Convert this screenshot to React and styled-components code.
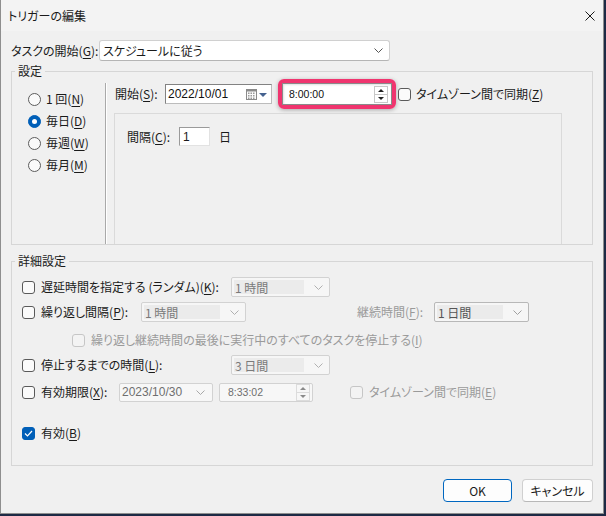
import React from 'react';
import styled, { createGlobalStyle } from 'styled-components';

const Global = createGlobalStyle`
  html, body { margin: 0; padding: 0; background: #1d2a45; }
  body {
    font-family: "Noto Sans CJK JP", "Noto Sans", sans-serif;
    font-size: 12px;
    color: #1a1a1a;
    font-feature-settings: "palt";
  }
  * { box-sizing: border-box; }
`;

const Window = styled.div`
  width: 604px;
  height: 514px;
  background: #f0f0f0;
  border: 1px solid #8e8e8e;
  border-top: none;
  display: flex;
  flex-direction: column;
`;

const TitleBar = styled.div`
  height: 31px;
  flex: none;
  background: #f3f3f3;
  display: flex;
  align-items: center;
  justify-content: space-between;
  padding-left: 7px;
`;

const Title = styled.span`
  font-size: 12px;
  line-height: 16px;
`;

const CloseBtn = styled.span`
  width: 10px;
  height: 10px;
  margin-right: 8px;
  display: flex;
`;

const Body = styled.div`
  flex: 1;
  padding: 9px 10px 0 10px;
  display: flex;
  flex-direction: column;
`;

const Row = styled.div`
  display: flex;
  align-items: center;
  height: ${p => p.$h || 20}px;
  margin-top: ${p => p.$mt || 0}px;
  margin-left: ${p => p.$ml || 0}px;
  flex: none;
`;

const Label = styled.span`
  flex: none;
  width: ${p => (p.$w ? p.$w + 'px' : 'auto')};
  margin-left: ${p => p.$ml || 0}px;
  color: ${p => (p.$gray ? '#9a9a9a' : '#1a1a1a')};
  line-height: 16px;
  white-space: nowrap;
`;

const Key = styled.span`
  text-decoration: underline;
  text-underline-offset: 2px;
`;

const Combo = styled.div`
  width: ${p => p.$w}px;
  height: 21px;
  background: #ffffff;
  border: 1px solid #d0d0d0;
  border-bottom-color: #b5b5b5;
  border-radius: 3px;
  display: flex;
  align-items: center;
  justify-content: space-between;
  padding: 0 6px 0 3px;
`;

const DisCombo = styled.div`
  width: ${p => p.$w}px;
  height: 20px;
  background: #f6f6f6;
  border: 1px solid ${p => (p.$strong ? '#b8b8b8' : '#d2d2d2')};
  border-radius: 2px;
  display: flex;
  align-items: center;
  padding: 2px 6px 2px 2px;
  margin-left: ${p => p.$ml || 0}px;
`;

const DisField = styled.span`
  flex: 1;
  height: 100%;
  background: #ebebeb;
  color: ${p => (p.$strong ? '#555' : '#7a7a7a')};
  display: flex;
  align-items: center;
  padding-left: 1px;
  margin-right: 10px;
  font-size: 12px;
`;

const Group = styled.fieldset`
  margin: ${p => p.$mt}px 0 0 0;
  padding: 0;
  border: 1px solid #d6d6d6;
  min-width: 0;
  flex: none;
`;

const Legend = styled.legend`
  margin-left: 3px;
  padding: 0 3px;
  line-height: 16px;
  font-size: 12px;
`;

const SettingsBody = styled.div`
  display: flex;
  height: 165px;
`;

const RadioCol = styled.div`
  width: 93px;
  padding: 9px 0 0 16px;
  display: flex;
  flex-direction: column;
`;

const RadioRow = styled.label`
  height: 22px;
  display: flex;
  align-items: center;
  gap: 5px;
`;

const Radio = styled.span`
  flex: none;
  width: 13px;
  height: 13px;
  border-radius: 50%;
  border: 1px solid ${p => (p.$on ? '#005fb8' : '#5c5c5c')};
  background: ${p => (p.$on ? '#005fb8' : '#fafafa')};
  display: flex;
  align-items: center;
  justify-content: center;
  &::after {
    content: '';
    width: 5px;
    height: 5px;
    border-radius: 50%;
    background: #fff;
    display: ${p => (p.$on ? 'block' : 'none')};
  }
`;

const VDivider = styled.div`
  width: 2px;
  margin-top: 4px;
  border-left: 1px solid #a9a9a9;
  border-right: 1px solid #ffffff;
`;

const RightArea = styled.div`
  flex: 1;
  display: flex;
  flex-direction: column;
`;

const StartRow = styled.div`
  height: 30px;
  display: flex;
  align-items: center;
  padding-left: 8px;
`;

const DateBox = styled.div`
  width: ${p => p.$w}px;
  height: ${p => p.$h || 20}px;
  background: ${p => (p.$dis ? '#f7f7f7' : '#ffffff')};
  border: 1px solid ${p => (p.$dis ? '#d2d2d2' : '#828282')};
  border-bottom-color: ${p => (p.$dis ? '#d2d2d2' : '#bcbcbc')};
  border-right-color: ${p => (p.$dis ? '#d2d2d2' : '#bcbcbc')};
  border-radius: ${p => (p.$dis ? 2 : 0)}px;
  display: flex;
  align-items: center;
  padding: 0 ${p => p.$pr || 4}px 0 ${p => p.$pl || 2}px;
  margin-left: ${p => p.$ml || 0}px;
  font-family: "Liberation Sans", Arial, sans-serif;
  font-size: ${p => p.$fs || 12}px;
  color: ${p => (p.$dis ? '#6f6f6f' : '#111')};
`;

const Grow = styled.span`
  flex: 1;
`;

const Ring = styled.div`
  width: 118px;
  height: 30px;
  margin-left: 6px;
  border: 4px solid #f0356f;
  border-radius: 6px;
  box-shadow: 0 1px 4px rgba(0, 0, 0, 0.3);
  display: flex;
`;

const TimeBox = styled.div`
  flex: 1;
  background: #ffffff;
  border: 1px solid #8a8a8a;
  box-shadow: inset 1px 1px 2px rgba(0, 0, 0, 0.12);
  display: flex;
  align-items: center;
  padding: 0 3px 0 6px;
  font-family: "Liberation Sans", Arial, sans-serif;
  font-size: 10.5px;
  color: #111;
`;

const CheckWrap = styled.label`
  display: flex;
  align-items: center;
  margin-left: ${p => p.$ml || 0}px;
`;

const Box = styled.span`
  flex: none;
  width: 13px;
  height: 13px;
  border-radius: 3px;
  border: 1px solid ${p => (p.$checked ? '#005fb8' : p.$disabled ? '#c6c6c6' : '#5a5a5a')};
  background: ${p => (p.$checked ? '#005fb8' : p.$disabled ? '#f3f3f3' : '#fbfbfb')};
  display: flex;
  align-items: center;
  justify-content: center;
`;

const Panel = styled.div`
  flex: 1;
  width: 448px;
  margin: 4px 0 0 7px;
  border: 1px solid #dadada;
  border-bottom: none;
  padding: 13px 0 0 12px;
`;

const Input = styled.div`
  width: 31px;
  height: 19px;
  background: #ffffff;
  border: 1px solid #e2e2e2;
  border-left-color: #9a9a9a;
  border-top-color: #9a9a9a;
  display: flex;
  align-items: center;
  padding-left: 3px;
  font-family: "Liberation Sans", Arial, sans-serif;
  font-size: 12px;
`;

const AdvBody = styled.div`
  padding: 8px 0 22px 10px;
  display: flex;
  flex-direction: column;
`;

const Footer = styled.div`
  margin-top: 13px;
  display: flex;
  justify-content: flex-end;
  gap: 10px;
`;

const Button = styled.button`
  width: ${p => p.$w}px;
  height: 23px;
  border-radius: 4px;
  border: 1px solid ${p => (p.$primary ? '#0067c0' : '#d0d0d0')};
  border-bottom-color: ${p => (p.$primary ? '#0067c0' : '#b8b8b8')};
  background: #fdfdfd;
  font-family: "Noto Sans CJK JP", sans-serif;
  font-size: 12px;
  color: #1a1a1a;
  padding: 0;
  font-feature-settings: "palt";
`;

const Chevron = ({ color = '#6e6e6e' }) => (
  <svg width="9" height="5" viewBox="0 0 9 5" style={{ flex: 'none' }}>
    <polyline points="0.5,0.5 4.5,4.5 8.5,0.5" fill="none" stroke={color} strokeWidth="1" />
  </svg>
);

const Check = () => (
  <svg width="9" height="7" viewBox="0 0 9 7">
    <polyline points="1,3.5 3.5,6 8,1" fill="none" stroke="#fff" strokeWidth="1.2" />
  </svg>
);

const CheckBox = ({ checked, disabled }) => (
  <Box $checked={checked} $disabled={disabled}>{checked && <Check />}</Box>
);

const CalendarIcon = () => (
  <svg width="22" height="11" viewBox="0 0 22 11" style={{ flex: 'none' }}>
    <rect x="0.5" y="0.5" width="10" height="10" fill="#fafafa" stroke="#8a8a8a" />
    <rect x="0.5" y="0.5" width="10" height="2" fill="#8a8a8a" />
    {[3, 5.5, 8].map(y => [2, 4.5, 7].map(x => (
      <rect key={x + '-' + y} x={x} y={y + 0.5} width="1.5" height="1.5" fill="#9a9a9a" />
    )))}
    <polygon points="13,4 21,4 17,8" fill="#45628f" />
  </svg>
);

const Spin = ({ color = '#222', frame = '#c8c8c8' }) => (
  <svg width="14" height="17" viewBox="0 0 14 17" style={{ flex: 'none' }}>
    <rect x="0.5" y="0.5" width="13" height="16" fill="none" stroke={frame} />
    <line x1="1" y1="8.5" x2="13" y2="8.5" stroke={frame} />
    <polygon points="4,6 10,6 7,3" fill={color} />
    <polygon points="4,11 10,11 7,14" fill={color} />
  </svg>
);

const radios = [
  { t: '1 回', k: 'N' },
  { t: '毎日', k: 'D', on: true },
  { t: '毎週', k: 'W' },
  { t: '毎月', k: 'M' },
];

export default function App() {
  return (
    <>
      <Global />
      <Window>
        <TitleBar>
          <Title>トリガーの編集</Title>
          <CloseBtn>
            <svg width="10" height="10" viewBox="0 0 10 10">
              <path d="M0.5 0.5L9.5 9.5M9.5 0.5L0.5 9.5" stroke="#1a1a1a" strokeWidth="1" />
            </svg>
          </CloseBtn>
        </TitleBar>
        <Body>
          <Row $h={21}>
            <Label $w={88}>タスクの開始(<Key>G</Key>):</Label>
            <Combo $w={291}>
              <span>スケジュールに従う</span>
              <Chevron color="#555" />
            </Combo>
          </Row>

          <Group $mt={2}>
            <Legend>設定</Legend>
            <SettingsBody>
              <RadioCol>
                {radios.map(r => (
                  <RadioRow key={r.k}>
                    <Radio $on={r.on} />
                    <Label>{r.t}(<Key>{r.k}</Key>)</Label>
                  </RadioRow>
                ))}
              </RadioCol>
              <VDivider />
              <RightArea>
                <StartRow>
                  <Label $w={50}>開始(<Key>S</Key>):</Label>
                  <DateBox $w={107} $pl={2} $pr={3}>
                    <Grow>2022/10/01</Grow>
                    <CalendarIcon />
                  </DateBox>
                  <Ring>
                    <TimeBox>
                      <Grow>8:00:00</Grow>
                      <Spin />
                    </TimeBox>
                  </Ring>
                  <CheckWrap $ml={2}>
                    <CheckBox />
                    <Label $ml={5}>タイムゾーン間で同期(<Key>Z</Key>)</Label>
                  </CheckWrap>
                </StartRow>
                <Panel>
                  <Row $h={19}>
                    <Label $w={52}>間隔(<Key>C</Key>):</Label>
                    <Input>1</Input>
                    <Label $ml={9}>日</Label>
                  </Row>
                </Panel>
              </RightArea>
            </SettingsBody>
          </Group>

          <Group $mt={8}>
            <Legend>詳細設定</Legend>
            <AdvBody>
              <Row>
                <CheckBox />
                <Label $w={190} $ml={6}>遅延時間を指定する (ランダム)(<Key>K</Key>):</Label>
                <DisCombo $w={99}>
                  <DisField>1 時間</DisField>
                  <Chevron color="#b0b0b0" />
                </DisCombo>
              </Row>
              <Row $mt={5}>
                <CheckBox />
                <Label $w={100} $ml={6}>繰り返し間隔(<Key>P</Key>):</Label>
                <DisCombo $w={105}>
                  <DisField>1 時間</DisField>
                  <Chevron color="#b0b0b0" />
                </DisCombo>
                <Label $gray $w={77} $ml={111}>継続時間(<Key>F</Key>):</Label>
                <DisCombo $w={95} $strong>
                  <DisField $strong>1 日間</DisField>
                  <Chevron color="#a0a0a0" />
                </DisCombo>
              </Row>
              <Row $mt={8} $ml={50}>
                <CheckBox disabled />
                <Label $gray $ml={6}>繰り返し継続時間の最後に実行中のすべてのタスクを停止する(<Key>I</Key>)</Label>
              </Row>
              <Row $mt={5}>
                <CheckBox />
                <Label $w={190} $ml={6}>停止するまでの時間(<Key>L</Key>):</Label>
                <DisCombo $w={99}>
                  <DisField>3 日間</DisField>
                  <Chevron color="#b0b0b0" />
                </DisCombo>
              </Row>
              <Row $mt={7}>
                <CheckBox />
                <Label $w={78} $ml={6}>有効期限(<Key>X</Key>):</Label>
                <DateBox $dis $w={94} $h={19} $pl={2} $pr={7}>
                  <Grow>2023/10/30</Grow>
                  <Chevron color="#a8a8a8" />
                </DateBox>
                <DateBox $dis $w={94} $h={19} $pl={8} $pr={2} $fs={10.5} $ml={6}>
                  <Grow>8:33:02</Grow>
                  <Spin color="#8a8a8a" frame="#dcdcdc" />
                </DateBox>
                <CheckWrap $ml={37}>
                  <CheckBox disabled />
                  <Label $gray $ml={6}>タイムゾーン間で同期(<Key>E</Key>)</Label>
                </CheckWrap>
              </Row>
              <Row $mt={21}>
                <CheckBox checked />
                <Label $ml={6}>有効(<Key>B</Key>)</Label>
              </Row>
            </AdvBody>
          </Group>

          <Footer>
            <Button $primary $w={69}>OK</Button>
            <Button $w={71}>キャンセル</Button>
          </Footer>
        </Body>
      </Window>
    </>
  );
}
